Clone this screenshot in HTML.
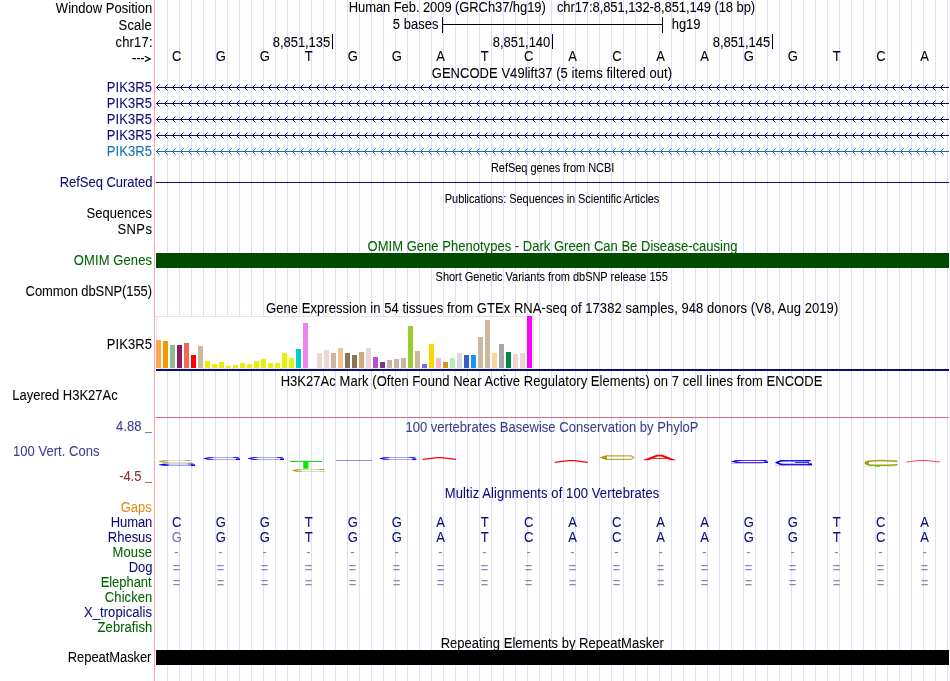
<!DOCTYPE html><html><head><meta charset="utf-8"><style>
html,body{margin:0;padding:0;background:#fff;width:950px;height:681px;overflow:hidden}
svg{display:block;will-change:transform}
text{font-family:"Liberation Sans",sans-serif;font-size:13px;stroke-width:0.06px}
.s{font-size:11px}
</style></head><body>
<svg width="950" height="681" viewBox="0 0 950 681">
<path d="M167.5 0V681 M179.5 0V681 M191.5 0V681 M203.5 0V681 M215.5 0V681 M227.5 0V681 M239.5 0V681 M251.5 0V681 M263.5 0V681 M275.5 0V681 M287.5 0V681 M299.5 0V681 M311.5 0V681 M323.5 0V681 M335.5 0V681 M347.5 0V681 M359.5 0V681 M371.5 0V681 M383.5 0V681 M395.5 0V681 M407.5 0V681 M419.5 0V681 M431.5 0V681 M443.5 0V681 M455.5 0V681 M467.5 0V681 M479.5 0V681 M491.5 0V681 M503.5 0V681 M515.5 0V681 M527.5 0V681 M539.5 0V681 M551.5 0V681 M563.5 0V681 M575.5 0V681 M587.5 0V681 M599.5 0V681 M611.5 0V681 M623.5 0V681 M635.5 0V681 M647.5 0V681 M659.5 0V681 M671.5 0V681 M683.5 0V681 M695.5 0V681 M707.5 0V681 M719.5 0V681 M731.5 0V681 M743.5 0V681 M755.5 0V681 M767.5 0V681 M779.5 0V681 M791.5 0V681 M803.5 0V681 M815.5 0V681 M827.5 0V681 M839.5 0V681 M851.5 0V681 M863.5 0V681 M875.5 0V681 M887.5 0V681 M899.5 0V681 M911.5 0V681 M923.5 0V681 M935.5 0V681 M947.5 0V681" stroke="#DDDDFF" fill="none"/>
<rect x="154" y="0" width="1" height="681" fill="#FFAAAA"/>
<path d="M442.5 17V33M662.5 17V33M442 24.5H663" stroke="#000" fill="none"/>
<rect x="332" y="34" width="1" height="15" fill="#000"/>
<rect x="552" y="34" width="1" height="15" fill="#000"/>
<rect x="772" y="34" width="1" height="15" fill="#000"/>
<path d="M156 87.5H949 M159.5 84.5L156.5 87.5L159.5 90.5 M167.5 84.5L164.5 87.5L167.5 90.5 M175.5 84.5L172.5 87.5L175.5 90.5 M183.5 84.5L180.5 87.5L183.5 90.5 M191.5 84.5L188.5 87.5L191.5 90.5 M199.5 84.5L196.5 87.5L199.5 90.5 M207.5 84.5L204.5 87.5L207.5 90.5 M215.5 84.5L212.5 87.5L215.5 90.5 M223.5 84.5L220.5 87.5L223.5 90.5 M231.5 84.5L228.5 87.5L231.5 90.5 M239.5 84.5L236.5 87.5L239.5 90.5 M247.5 84.5L244.5 87.5L247.5 90.5 M255.5 84.5L252.5 87.5L255.5 90.5 M263.5 84.5L260.5 87.5L263.5 90.5 M271.5 84.5L268.5 87.5L271.5 90.5 M279.5 84.5L276.5 87.5L279.5 90.5 M287.5 84.5L284.5 87.5L287.5 90.5 M295.5 84.5L292.5 87.5L295.5 90.5 M303.5 84.5L300.5 87.5L303.5 90.5 M311.5 84.5L308.5 87.5L311.5 90.5 M319.5 84.5L316.5 87.5L319.5 90.5 M327.5 84.5L324.5 87.5L327.5 90.5 M335.5 84.5L332.5 87.5L335.5 90.5 M343.5 84.5L340.5 87.5L343.5 90.5 M351.5 84.5L348.5 87.5L351.5 90.5 M359.5 84.5L356.5 87.5L359.5 90.5 M367.5 84.5L364.5 87.5L367.5 90.5 M375.5 84.5L372.5 87.5L375.5 90.5 M383.5 84.5L380.5 87.5L383.5 90.5 M391.5 84.5L388.5 87.5L391.5 90.5 M399.5 84.5L396.5 87.5L399.5 90.5 M407.5 84.5L404.5 87.5L407.5 90.5 M415.5 84.5L412.5 87.5L415.5 90.5 M423.5 84.5L420.5 87.5L423.5 90.5 M431.5 84.5L428.5 87.5L431.5 90.5 M439.5 84.5L436.5 87.5L439.5 90.5 M447.5 84.5L444.5 87.5L447.5 90.5 M455.5 84.5L452.5 87.5L455.5 90.5 M463.5 84.5L460.5 87.5L463.5 90.5 M471.5 84.5L468.5 87.5L471.5 90.5 M479.5 84.5L476.5 87.5L479.5 90.5 M487.5 84.5L484.5 87.5L487.5 90.5 M495.5 84.5L492.5 87.5L495.5 90.5 M503.5 84.5L500.5 87.5L503.5 90.5 M511.5 84.5L508.5 87.5L511.5 90.5 M519.5 84.5L516.5 87.5L519.5 90.5 M527.5 84.5L524.5 87.5L527.5 90.5 M535.5 84.5L532.5 87.5L535.5 90.5 M543.5 84.5L540.5 87.5L543.5 90.5 M551.5 84.5L548.5 87.5L551.5 90.5 M559.5 84.5L556.5 87.5L559.5 90.5 M567.5 84.5L564.5 87.5L567.5 90.5 M575.5 84.5L572.5 87.5L575.5 90.5 M583.5 84.5L580.5 87.5L583.5 90.5 M591.5 84.5L588.5 87.5L591.5 90.5 M599.5 84.5L596.5 87.5L599.5 90.5 M607.5 84.5L604.5 87.5L607.5 90.5 M615.5 84.5L612.5 87.5L615.5 90.5 M623.5 84.5L620.5 87.5L623.5 90.5 M631.5 84.5L628.5 87.5L631.5 90.5 M639.5 84.5L636.5 87.5L639.5 90.5 M647.5 84.5L644.5 87.5L647.5 90.5 M655.5 84.5L652.5 87.5L655.5 90.5 M663.5 84.5L660.5 87.5L663.5 90.5 M671.5 84.5L668.5 87.5L671.5 90.5 M679.5 84.5L676.5 87.5L679.5 90.5 M687.5 84.5L684.5 87.5L687.5 90.5 M695.5 84.5L692.5 87.5L695.5 90.5 M703.5 84.5L700.5 87.5L703.5 90.5 M711.5 84.5L708.5 87.5L711.5 90.5 M719.5 84.5L716.5 87.5L719.5 90.5 M727.5 84.5L724.5 87.5L727.5 90.5 M735.5 84.5L732.5 87.5L735.5 90.5 M743.5 84.5L740.5 87.5L743.5 90.5 M751.5 84.5L748.5 87.5L751.5 90.5 M759.5 84.5L756.5 87.5L759.5 90.5 M767.5 84.5L764.5 87.5L767.5 90.5 M775.5 84.5L772.5 87.5L775.5 90.5 M783.5 84.5L780.5 87.5L783.5 90.5 M791.5 84.5L788.5 87.5L791.5 90.5 M799.5 84.5L796.5 87.5L799.5 90.5 M807.5 84.5L804.5 87.5L807.5 90.5 M815.5 84.5L812.5 87.5L815.5 90.5 M823.5 84.5L820.5 87.5L823.5 90.5 M831.5 84.5L828.5 87.5L831.5 90.5 M839.5 84.5L836.5 87.5L839.5 90.5 M847.5 84.5L844.5 87.5L847.5 90.5 M855.5 84.5L852.5 87.5L855.5 90.5 M863.5 84.5L860.5 87.5L863.5 90.5 M871.5 84.5L868.5 87.5L871.5 90.5 M879.5 84.5L876.5 87.5L879.5 90.5 M887.5 84.5L884.5 87.5L887.5 90.5 M895.5 84.5L892.5 87.5L895.5 90.5 M903.5 84.5L900.5 87.5L903.5 90.5 M911.5 84.5L908.5 87.5L911.5 90.5 M919.5 84.5L916.5 87.5L919.5 90.5 M927.5 84.5L924.5 87.5L927.5 90.5 M935.5 84.5L932.5 87.5L935.5 90.5 M943.5 84.5L940.5 87.5L943.5 90.5" stroke="#0C0C78" fill="none"/>
<path d="M156 103.5H949 M159.5 100.5L156.5 103.5L159.5 106.5 M167.5 100.5L164.5 103.5L167.5 106.5 M175.5 100.5L172.5 103.5L175.5 106.5 M183.5 100.5L180.5 103.5L183.5 106.5 M191.5 100.5L188.5 103.5L191.5 106.5 M199.5 100.5L196.5 103.5L199.5 106.5 M207.5 100.5L204.5 103.5L207.5 106.5 M215.5 100.5L212.5 103.5L215.5 106.5 M223.5 100.5L220.5 103.5L223.5 106.5 M231.5 100.5L228.5 103.5L231.5 106.5 M239.5 100.5L236.5 103.5L239.5 106.5 M247.5 100.5L244.5 103.5L247.5 106.5 M255.5 100.5L252.5 103.5L255.5 106.5 M263.5 100.5L260.5 103.5L263.5 106.5 M271.5 100.5L268.5 103.5L271.5 106.5 M279.5 100.5L276.5 103.5L279.5 106.5 M287.5 100.5L284.5 103.5L287.5 106.5 M295.5 100.5L292.5 103.5L295.5 106.5 M303.5 100.5L300.5 103.5L303.5 106.5 M311.5 100.5L308.5 103.5L311.5 106.5 M319.5 100.5L316.5 103.5L319.5 106.5 M327.5 100.5L324.5 103.5L327.5 106.5 M335.5 100.5L332.5 103.5L335.5 106.5 M343.5 100.5L340.5 103.5L343.5 106.5 M351.5 100.5L348.5 103.5L351.5 106.5 M359.5 100.5L356.5 103.5L359.5 106.5 M367.5 100.5L364.5 103.5L367.5 106.5 M375.5 100.5L372.5 103.5L375.5 106.5 M383.5 100.5L380.5 103.5L383.5 106.5 M391.5 100.5L388.5 103.5L391.5 106.5 M399.5 100.5L396.5 103.5L399.5 106.5 M407.5 100.5L404.5 103.5L407.5 106.5 M415.5 100.5L412.5 103.5L415.5 106.5 M423.5 100.5L420.5 103.5L423.5 106.5 M431.5 100.5L428.5 103.5L431.5 106.5 M439.5 100.5L436.5 103.5L439.5 106.5 M447.5 100.5L444.5 103.5L447.5 106.5 M455.5 100.5L452.5 103.5L455.5 106.5 M463.5 100.5L460.5 103.5L463.5 106.5 M471.5 100.5L468.5 103.5L471.5 106.5 M479.5 100.5L476.5 103.5L479.5 106.5 M487.5 100.5L484.5 103.5L487.5 106.5 M495.5 100.5L492.5 103.5L495.5 106.5 M503.5 100.5L500.5 103.5L503.5 106.5 M511.5 100.5L508.5 103.5L511.5 106.5 M519.5 100.5L516.5 103.5L519.5 106.5 M527.5 100.5L524.5 103.5L527.5 106.5 M535.5 100.5L532.5 103.5L535.5 106.5 M543.5 100.5L540.5 103.5L543.5 106.5 M551.5 100.5L548.5 103.5L551.5 106.5 M559.5 100.5L556.5 103.5L559.5 106.5 M567.5 100.5L564.5 103.5L567.5 106.5 M575.5 100.5L572.5 103.5L575.5 106.5 M583.5 100.5L580.5 103.5L583.5 106.5 M591.5 100.5L588.5 103.5L591.5 106.5 M599.5 100.5L596.5 103.5L599.5 106.5 M607.5 100.5L604.5 103.5L607.5 106.5 M615.5 100.5L612.5 103.5L615.5 106.5 M623.5 100.5L620.5 103.5L623.5 106.5 M631.5 100.5L628.5 103.5L631.5 106.5 M639.5 100.5L636.5 103.5L639.5 106.5 M647.5 100.5L644.5 103.5L647.5 106.5 M655.5 100.5L652.5 103.5L655.5 106.5 M663.5 100.5L660.5 103.5L663.5 106.5 M671.5 100.5L668.5 103.5L671.5 106.5 M679.5 100.5L676.5 103.5L679.5 106.5 M687.5 100.5L684.5 103.5L687.5 106.5 M695.5 100.5L692.5 103.5L695.5 106.5 M703.5 100.5L700.5 103.5L703.5 106.5 M711.5 100.5L708.5 103.5L711.5 106.5 M719.5 100.5L716.5 103.5L719.5 106.5 M727.5 100.5L724.5 103.5L727.5 106.5 M735.5 100.5L732.5 103.5L735.5 106.5 M743.5 100.5L740.5 103.5L743.5 106.5 M751.5 100.5L748.5 103.5L751.5 106.5 M759.5 100.5L756.5 103.5L759.5 106.5 M767.5 100.5L764.5 103.5L767.5 106.5 M775.5 100.5L772.5 103.5L775.5 106.5 M783.5 100.5L780.5 103.5L783.5 106.5 M791.5 100.5L788.5 103.5L791.5 106.5 M799.5 100.5L796.5 103.5L799.5 106.5 M807.5 100.5L804.5 103.5L807.5 106.5 M815.5 100.5L812.5 103.5L815.5 106.5 M823.5 100.5L820.5 103.5L823.5 106.5 M831.5 100.5L828.5 103.5L831.5 106.5 M839.5 100.5L836.5 103.5L839.5 106.5 M847.5 100.5L844.5 103.5L847.5 106.5 M855.5 100.5L852.5 103.5L855.5 106.5 M863.5 100.5L860.5 103.5L863.5 106.5 M871.5 100.5L868.5 103.5L871.5 106.5 M879.5 100.5L876.5 103.5L879.5 106.5 M887.5 100.5L884.5 103.5L887.5 106.5 M895.5 100.5L892.5 103.5L895.5 106.5 M903.5 100.5L900.5 103.5L903.5 106.5 M911.5 100.5L908.5 103.5L911.5 106.5 M919.5 100.5L916.5 103.5L919.5 106.5 M927.5 100.5L924.5 103.5L927.5 106.5 M935.5 100.5L932.5 103.5L935.5 106.5 M943.5 100.5L940.5 103.5L943.5 106.5" stroke="#0C0C78" fill="none"/>
<path d="M156 119.5H949 M159.5 116.5L156.5 119.5L159.5 122.5 M167.5 116.5L164.5 119.5L167.5 122.5 M175.5 116.5L172.5 119.5L175.5 122.5 M183.5 116.5L180.5 119.5L183.5 122.5 M191.5 116.5L188.5 119.5L191.5 122.5 M199.5 116.5L196.5 119.5L199.5 122.5 M207.5 116.5L204.5 119.5L207.5 122.5 M215.5 116.5L212.5 119.5L215.5 122.5 M223.5 116.5L220.5 119.5L223.5 122.5 M231.5 116.5L228.5 119.5L231.5 122.5 M239.5 116.5L236.5 119.5L239.5 122.5 M247.5 116.5L244.5 119.5L247.5 122.5 M255.5 116.5L252.5 119.5L255.5 122.5 M263.5 116.5L260.5 119.5L263.5 122.5 M271.5 116.5L268.5 119.5L271.5 122.5 M279.5 116.5L276.5 119.5L279.5 122.5 M287.5 116.5L284.5 119.5L287.5 122.5 M295.5 116.5L292.5 119.5L295.5 122.5 M303.5 116.5L300.5 119.5L303.5 122.5 M311.5 116.5L308.5 119.5L311.5 122.5 M319.5 116.5L316.5 119.5L319.5 122.5 M327.5 116.5L324.5 119.5L327.5 122.5 M335.5 116.5L332.5 119.5L335.5 122.5 M343.5 116.5L340.5 119.5L343.5 122.5 M351.5 116.5L348.5 119.5L351.5 122.5 M359.5 116.5L356.5 119.5L359.5 122.5 M367.5 116.5L364.5 119.5L367.5 122.5 M375.5 116.5L372.5 119.5L375.5 122.5 M383.5 116.5L380.5 119.5L383.5 122.5 M391.5 116.5L388.5 119.5L391.5 122.5 M399.5 116.5L396.5 119.5L399.5 122.5 M407.5 116.5L404.5 119.5L407.5 122.5 M415.5 116.5L412.5 119.5L415.5 122.5 M423.5 116.5L420.5 119.5L423.5 122.5 M431.5 116.5L428.5 119.5L431.5 122.5 M439.5 116.5L436.5 119.5L439.5 122.5 M447.5 116.5L444.5 119.5L447.5 122.5 M455.5 116.5L452.5 119.5L455.5 122.5 M463.5 116.5L460.5 119.5L463.5 122.5 M471.5 116.5L468.5 119.5L471.5 122.5 M479.5 116.5L476.5 119.5L479.5 122.5 M487.5 116.5L484.5 119.5L487.5 122.5 M495.5 116.5L492.5 119.5L495.5 122.5 M503.5 116.5L500.5 119.5L503.5 122.5 M511.5 116.5L508.5 119.5L511.5 122.5 M519.5 116.5L516.5 119.5L519.5 122.5 M527.5 116.5L524.5 119.5L527.5 122.5 M535.5 116.5L532.5 119.5L535.5 122.5 M543.5 116.5L540.5 119.5L543.5 122.5 M551.5 116.5L548.5 119.5L551.5 122.5 M559.5 116.5L556.5 119.5L559.5 122.5 M567.5 116.5L564.5 119.5L567.5 122.5 M575.5 116.5L572.5 119.5L575.5 122.5 M583.5 116.5L580.5 119.5L583.5 122.5 M591.5 116.5L588.5 119.5L591.5 122.5 M599.5 116.5L596.5 119.5L599.5 122.5 M607.5 116.5L604.5 119.5L607.5 122.5 M615.5 116.5L612.5 119.5L615.5 122.5 M623.5 116.5L620.5 119.5L623.5 122.5 M631.5 116.5L628.5 119.5L631.5 122.5 M639.5 116.5L636.5 119.5L639.5 122.5 M647.5 116.5L644.5 119.5L647.5 122.5 M655.5 116.5L652.5 119.5L655.5 122.5 M663.5 116.5L660.5 119.5L663.5 122.5 M671.5 116.5L668.5 119.5L671.5 122.5 M679.5 116.5L676.5 119.5L679.5 122.5 M687.5 116.5L684.5 119.5L687.5 122.5 M695.5 116.5L692.5 119.5L695.5 122.5 M703.5 116.5L700.5 119.5L703.5 122.5 M711.5 116.5L708.5 119.5L711.5 122.5 M719.5 116.5L716.5 119.5L719.5 122.5 M727.5 116.5L724.5 119.5L727.5 122.5 M735.5 116.5L732.5 119.5L735.5 122.5 M743.5 116.5L740.5 119.5L743.5 122.5 M751.5 116.5L748.5 119.5L751.5 122.5 M759.5 116.5L756.5 119.5L759.5 122.5 M767.5 116.5L764.5 119.5L767.5 122.5 M775.5 116.5L772.5 119.5L775.5 122.5 M783.5 116.5L780.5 119.5L783.5 122.5 M791.5 116.5L788.5 119.5L791.5 122.5 M799.5 116.5L796.5 119.5L799.5 122.5 M807.5 116.5L804.5 119.5L807.5 122.5 M815.5 116.5L812.5 119.5L815.5 122.5 M823.5 116.5L820.5 119.5L823.5 122.5 M831.5 116.5L828.5 119.5L831.5 122.5 M839.5 116.5L836.5 119.5L839.5 122.5 M847.5 116.5L844.5 119.5L847.5 122.5 M855.5 116.5L852.5 119.5L855.5 122.5 M863.5 116.5L860.5 119.5L863.5 122.5 M871.5 116.5L868.5 119.5L871.5 122.5 M879.5 116.5L876.5 119.5L879.5 122.5 M887.5 116.5L884.5 119.5L887.5 122.5 M895.5 116.5L892.5 119.5L895.5 122.5 M903.5 116.5L900.5 119.5L903.5 122.5 M911.5 116.5L908.5 119.5L911.5 122.5 M919.5 116.5L916.5 119.5L919.5 122.5 M927.5 116.5L924.5 119.5L927.5 122.5 M935.5 116.5L932.5 119.5L935.5 122.5 M943.5 116.5L940.5 119.5L943.5 122.5" stroke="#0C0C78" fill="none"/>
<path d="M156 135.5H949 M159.5 132.5L156.5 135.5L159.5 138.5 M167.5 132.5L164.5 135.5L167.5 138.5 M175.5 132.5L172.5 135.5L175.5 138.5 M183.5 132.5L180.5 135.5L183.5 138.5 M191.5 132.5L188.5 135.5L191.5 138.5 M199.5 132.5L196.5 135.5L199.5 138.5 M207.5 132.5L204.5 135.5L207.5 138.5 M215.5 132.5L212.5 135.5L215.5 138.5 M223.5 132.5L220.5 135.5L223.5 138.5 M231.5 132.5L228.5 135.5L231.5 138.5 M239.5 132.5L236.5 135.5L239.5 138.5 M247.5 132.5L244.5 135.5L247.5 138.5 M255.5 132.5L252.5 135.5L255.5 138.5 M263.5 132.5L260.5 135.5L263.5 138.5 M271.5 132.5L268.5 135.5L271.5 138.5 M279.5 132.5L276.5 135.5L279.5 138.5 M287.5 132.5L284.5 135.5L287.5 138.5 M295.5 132.5L292.5 135.5L295.5 138.5 M303.5 132.5L300.5 135.5L303.5 138.5 M311.5 132.5L308.5 135.5L311.5 138.5 M319.5 132.5L316.5 135.5L319.5 138.5 M327.5 132.5L324.5 135.5L327.5 138.5 M335.5 132.5L332.5 135.5L335.5 138.5 M343.5 132.5L340.5 135.5L343.5 138.5 M351.5 132.5L348.5 135.5L351.5 138.5 M359.5 132.5L356.5 135.5L359.5 138.5 M367.5 132.5L364.5 135.5L367.5 138.5 M375.5 132.5L372.5 135.5L375.5 138.5 M383.5 132.5L380.5 135.5L383.5 138.5 M391.5 132.5L388.5 135.5L391.5 138.5 M399.5 132.5L396.5 135.5L399.5 138.5 M407.5 132.5L404.5 135.5L407.5 138.5 M415.5 132.5L412.5 135.5L415.5 138.5 M423.5 132.5L420.5 135.5L423.5 138.5 M431.5 132.5L428.5 135.5L431.5 138.5 M439.5 132.5L436.5 135.5L439.5 138.5 M447.5 132.5L444.5 135.5L447.5 138.5 M455.5 132.5L452.5 135.5L455.5 138.5 M463.5 132.5L460.5 135.5L463.5 138.5 M471.5 132.5L468.5 135.5L471.5 138.5 M479.5 132.5L476.5 135.5L479.5 138.5 M487.5 132.5L484.5 135.5L487.5 138.5 M495.5 132.5L492.5 135.5L495.5 138.5 M503.5 132.5L500.5 135.5L503.5 138.5 M511.5 132.5L508.5 135.5L511.5 138.5 M519.5 132.5L516.5 135.5L519.5 138.5 M527.5 132.5L524.5 135.5L527.5 138.5 M535.5 132.5L532.5 135.5L535.5 138.5 M543.5 132.5L540.5 135.5L543.5 138.5 M551.5 132.5L548.5 135.5L551.5 138.5 M559.5 132.5L556.5 135.5L559.5 138.5 M567.5 132.5L564.5 135.5L567.5 138.5 M575.5 132.5L572.5 135.5L575.5 138.5 M583.5 132.5L580.5 135.5L583.5 138.5 M591.5 132.5L588.5 135.5L591.5 138.5 M599.5 132.5L596.5 135.5L599.5 138.5 M607.5 132.5L604.5 135.5L607.5 138.5 M615.5 132.5L612.5 135.5L615.5 138.5 M623.5 132.5L620.5 135.5L623.5 138.5 M631.5 132.5L628.5 135.5L631.5 138.5 M639.5 132.5L636.5 135.5L639.5 138.5 M647.5 132.5L644.5 135.5L647.5 138.5 M655.5 132.5L652.5 135.5L655.5 138.5 M663.5 132.5L660.5 135.5L663.5 138.5 M671.5 132.5L668.5 135.5L671.5 138.5 M679.5 132.5L676.5 135.5L679.5 138.5 M687.5 132.5L684.5 135.5L687.5 138.5 M695.5 132.5L692.5 135.5L695.5 138.5 M703.5 132.5L700.5 135.5L703.5 138.5 M711.5 132.5L708.5 135.5L711.5 138.5 M719.5 132.5L716.5 135.5L719.5 138.5 M727.5 132.5L724.5 135.5L727.5 138.5 M735.5 132.5L732.5 135.5L735.5 138.5 M743.5 132.5L740.5 135.5L743.5 138.5 M751.5 132.5L748.5 135.5L751.5 138.5 M759.5 132.5L756.5 135.5L759.5 138.5 M767.5 132.5L764.5 135.5L767.5 138.5 M775.5 132.5L772.5 135.5L775.5 138.5 M783.5 132.5L780.5 135.5L783.5 138.5 M791.5 132.5L788.5 135.5L791.5 138.5 M799.5 132.5L796.5 135.5L799.5 138.5 M807.5 132.5L804.5 135.5L807.5 138.5 M815.5 132.5L812.5 135.5L815.5 138.5 M823.5 132.5L820.5 135.5L823.5 138.5 M831.5 132.5L828.5 135.5L831.5 138.5 M839.5 132.5L836.5 135.5L839.5 138.5 M847.5 132.5L844.5 135.5L847.5 138.5 M855.5 132.5L852.5 135.5L855.5 138.5 M863.5 132.5L860.5 135.5L863.5 138.5 M871.5 132.5L868.5 135.5L871.5 138.5 M879.5 132.5L876.5 135.5L879.5 138.5 M887.5 132.5L884.5 135.5L887.5 138.5 M895.5 132.5L892.5 135.5L895.5 138.5 M903.5 132.5L900.5 135.5L903.5 138.5 M911.5 132.5L908.5 135.5L911.5 138.5 M919.5 132.5L916.5 135.5L919.5 138.5 M927.5 132.5L924.5 135.5L927.5 138.5 M935.5 132.5L932.5 135.5L935.5 138.5 M943.5 132.5L940.5 135.5L943.5 138.5" stroke="#0C0C78" fill="none"/>
<path d="M156 151.5H949 M159.5 148.5L156.5 151.5L159.5 154.5 M167.5 148.5L164.5 151.5L167.5 154.5 M175.5 148.5L172.5 151.5L175.5 154.5 M183.5 148.5L180.5 151.5L183.5 154.5 M191.5 148.5L188.5 151.5L191.5 154.5 M199.5 148.5L196.5 151.5L199.5 154.5 M207.5 148.5L204.5 151.5L207.5 154.5 M215.5 148.5L212.5 151.5L215.5 154.5 M223.5 148.5L220.5 151.5L223.5 154.5 M231.5 148.5L228.5 151.5L231.5 154.5 M239.5 148.5L236.5 151.5L239.5 154.5 M247.5 148.5L244.5 151.5L247.5 154.5 M255.5 148.5L252.5 151.5L255.5 154.5 M263.5 148.5L260.5 151.5L263.5 154.5 M271.5 148.5L268.5 151.5L271.5 154.5 M279.5 148.5L276.5 151.5L279.5 154.5 M287.5 148.5L284.5 151.5L287.5 154.5 M295.5 148.5L292.5 151.5L295.5 154.5 M303.5 148.5L300.5 151.5L303.5 154.5 M311.5 148.5L308.5 151.5L311.5 154.5 M319.5 148.5L316.5 151.5L319.5 154.5 M327.5 148.5L324.5 151.5L327.5 154.5 M335.5 148.5L332.5 151.5L335.5 154.5 M343.5 148.5L340.5 151.5L343.5 154.5 M351.5 148.5L348.5 151.5L351.5 154.5 M359.5 148.5L356.5 151.5L359.5 154.5 M367.5 148.5L364.5 151.5L367.5 154.5 M375.5 148.5L372.5 151.5L375.5 154.5 M383.5 148.5L380.5 151.5L383.5 154.5 M391.5 148.5L388.5 151.5L391.5 154.5 M399.5 148.5L396.5 151.5L399.5 154.5 M407.5 148.5L404.5 151.5L407.5 154.5 M415.5 148.5L412.5 151.5L415.5 154.5 M423.5 148.5L420.5 151.5L423.5 154.5 M431.5 148.5L428.5 151.5L431.5 154.5 M439.5 148.5L436.5 151.5L439.5 154.5 M447.5 148.5L444.5 151.5L447.5 154.5 M455.5 148.5L452.5 151.5L455.5 154.5 M463.5 148.5L460.5 151.5L463.5 154.5 M471.5 148.5L468.5 151.5L471.5 154.5 M479.5 148.5L476.5 151.5L479.5 154.5 M487.5 148.5L484.5 151.5L487.5 154.5 M495.5 148.5L492.5 151.5L495.5 154.5 M503.5 148.5L500.5 151.5L503.5 154.5 M511.5 148.5L508.5 151.5L511.5 154.5 M519.5 148.5L516.5 151.5L519.5 154.5 M527.5 148.5L524.5 151.5L527.5 154.5 M535.5 148.5L532.5 151.5L535.5 154.5 M543.5 148.5L540.5 151.5L543.5 154.5 M551.5 148.5L548.5 151.5L551.5 154.5 M559.5 148.5L556.5 151.5L559.5 154.5 M567.5 148.5L564.5 151.5L567.5 154.5 M575.5 148.5L572.5 151.5L575.5 154.5 M583.5 148.5L580.5 151.5L583.5 154.5 M591.5 148.5L588.5 151.5L591.5 154.5 M599.5 148.5L596.5 151.5L599.5 154.5 M607.5 148.5L604.5 151.5L607.5 154.5 M615.5 148.5L612.5 151.5L615.5 154.5 M623.5 148.5L620.5 151.5L623.5 154.5 M631.5 148.5L628.5 151.5L631.5 154.5 M639.5 148.5L636.5 151.5L639.5 154.5 M647.5 148.5L644.5 151.5L647.5 154.5 M655.5 148.5L652.5 151.5L655.5 154.5 M663.5 148.5L660.5 151.5L663.5 154.5 M671.5 148.5L668.5 151.5L671.5 154.5 M679.5 148.5L676.5 151.5L679.5 154.5 M687.5 148.5L684.5 151.5L687.5 154.5 M695.5 148.5L692.5 151.5L695.5 154.5 M703.5 148.5L700.5 151.5L703.5 154.5 M711.5 148.5L708.5 151.5L711.5 154.5 M719.5 148.5L716.5 151.5L719.5 154.5 M727.5 148.5L724.5 151.5L727.5 154.5 M735.5 148.5L732.5 151.5L735.5 154.5 M743.5 148.5L740.5 151.5L743.5 154.5 M751.5 148.5L748.5 151.5L751.5 154.5 M759.5 148.5L756.5 151.5L759.5 154.5 M767.5 148.5L764.5 151.5L767.5 154.5 M775.5 148.5L772.5 151.5L775.5 154.5 M783.5 148.5L780.5 151.5L783.5 154.5 M791.5 148.5L788.5 151.5L791.5 154.5 M799.5 148.5L796.5 151.5L799.5 154.5 M807.5 148.5L804.5 151.5L807.5 154.5 M815.5 148.5L812.5 151.5L815.5 154.5 M823.5 148.5L820.5 151.5L823.5 154.5 M831.5 148.5L828.5 151.5L831.5 154.5 M839.5 148.5L836.5 151.5L839.5 154.5 M847.5 148.5L844.5 151.5L847.5 154.5 M855.5 148.5L852.5 151.5L855.5 154.5 M863.5 148.5L860.5 151.5L863.5 154.5 M871.5 148.5L868.5 151.5L871.5 154.5 M879.5 148.5L876.5 151.5L879.5 154.5 M887.5 148.5L884.5 151.5L887.5 154.5 M895.5 148.5L892.5 151.5L895.5 154.5 M903.5 148.5L900.5 151.5L903.5 154.5 M911.5 148.5L908.5 151.5L911.5 154.5 M919.5 148.5L916.5 151.5L919.5 154.5 M927.5 148.5L924.5 151.5L927.5 154.5 M935.5 148.5L932.5 151.5L935.5 154.5 M943.5 148.5L940.5 151.5L943.5 154.5" stroke="#1470B4" fill="none"/>
<rect x="156" y="182" width="793" height="1" fill="#0C0C78"/>
<rect x="156" y="253" width="793" height="15" fill="#004B00"/>
<rect x="156" y="316" width="378" height="53" fill="#fff"/>
<path d="M156 316.5H533.5V368M156.5 316V368" stroke="#E6E6E6" fill="none"/>
<rect x="156" y="340" width="5" height="28" fill="#FFA54F"/>
<rect x="163" y="341" width="5" height="27" fill="#EE9A00"/>
<rect x="170" y="345" width="5" height="23" fill="#8FBC8F"/>
<rect x="177" y="345" width="5" height="23" fill="#8B1C62"/>
<rect x="184" y="343" width="5" height="25" fill="#EE6A50"/>
<rect x="191" y="355" width="5" height="13" fill="#FF0000"/>
<rect x="198" y="346" width="5" height="22" fill="#CDB79E"/>
<rect x="205" y="361" width="5" height="7" fill="#EEEE00"/>
<rect x="212" y="364" width="5" height="4" fill="#EEEE00"/>
<rect x="219" y="362" width="5" height="6" fill="#EEEE00"/>
<rect x="226" y="366" width="5" height="2" fill="#EEEE00"/>
<rect x="233" y="365" width="5" height="3" fill="#EEEE00"/>
<rect x="240" y="363" width="5" height="5" fill="#EEEE00"/>
<rect x="247" y="364" width="5" height="4" fill="#EEEE00"/>
<rect x="254" y="361" width="5" height="7" fill="#EEEE00"/>
<rect x="261" y="359" width="5" height="9" fill="#EEEE00"/>
<rect x="268" y="363" width="5" height="5" fill="#EEEE00"/>
<rect x="275" y="363" width="5" height="5" fill="#EEEE00"/>
<rect x="282" y="353" width="5" height="15" fill="#EEEE00"/>
<rect x="289" y="358" width="5" height="10" fill="#EEEE00"/>
<rect x="296" y="349" width="5" height="19" fill="#00CDCD"/>
<rect x="303" y="323" width="5" height="45" fill="#EE82EE"/>
<rect x="317" y="353" width="5" height="15" fill="#EED5D2"/>
<rect x="324" y="350" width="5" height="18" fill="#EED5D2"/>
<rect x="331" y="353" width="5" height="15" fill="#CDB79E"/>
<rect x="338" y="348" width="5" height="20" fill="#EEC591"/>
<rect x="345" y="353" width="5" height="15" fill="#8B7355"/>
<rect x="352" y="355" width="5" height="13" fill="#8B7355"/>
<rect x="359" y="352" width="5" height="16" fill="#CDAA7D"/>
<rect x="366" y="348" width="5" height="20" fill="#EED5D2"/>
<rect x="373" y="357" width="5" height="11" fill="#B452CD"/>
<rect x="380" y="362" width="5" height="6" fill="#7A378B"/>
<rect x="387" y="360" width="5" height="8" fill="#CDB79E"/>
<rect x="394" y="359" width="5" height="9" fill="#CDB79E"/>
<rect x="401" y="358" width="5" height="10" fill="#CDB79E"/>
<rect x="408" y="326" width="5" height="42" fill="#9ACD32"/>
<rect x="415" y="351" width="5" height="17" fill="#CDB79E"/>
<rect x="422" y="364" width="5" height="4" fill="#7A67EE"/>
<rect x="429" y="344" width="5" height="24" fill="#FFD700"/>
<rect x="436" y="358" width="5" height="10" fill="#FFB6C1"/>
<rect x="443" y="362" width="5" height="6" fill="#CD9B1D"/>
<rect x="450" y="358" width="5" height="10" fill="#B4EEB4"/>
<rect x="457" y="353" width="5" height="15" fill="#D9D9D9"/>
<rect x="464" y="355" width="5" height="13" fill="#3A5FCD"/>
<rect x="471" y="355" width="5" height="13" fill="#1E90FF"/>
<rect x="478" y="337" width="5" height="31" fill="#CDB79E"/>
<rect x="485" y="320" width="5" height="48" fill="#CDB79E"/>
<rect x="492" y="353" width="5" height="15" fill="#FFD39B"/>
<rect x="499" y="344" width="5" height="24" fill="#A6A6A6"/>
<rect x="506" y="352" width="5" height="16" fill="#008B45"/>
<rect x="513" y="354" width="5" height="14" fill="#EED5D2"/>
<rect x="520" y="353" width="5" height="15" fill="#EED5D2"/>
<rect x="527" y="316" width="5" height="52" fill="#FF00FF"/>
<rect x="157" y="368" width="377" height="1" fill="#EEEEE8"/>
<rect x="156" y="369" width="793" height="2" fill="#0C0C78"/>
<rect x="156" y="417" width="793" height="1" fill="#D86A82"/>
<rect x="156" y="650" width="793" height="15" fill="#000"/>
<rect x="145" y="432" width="7" height="1" fill="#7A7AB0"/>
<path d="M132.3 58.6H135.9M136.8 58.6H140M140.9 58.6H144" stroke="#000" stroke-width="1.1" fill="none"/>
<path d="M144.8 56.3L150.2 58.9L144.8 61.5" stroke="#000" stroke-width="1.2" fill="none" stroke-linejoin="miter"/>
<rect x="145" y="482" width="7" height="1" fill="#A86A6A"/>
<path d="M189.8 460.5L164.7 460.5L159.2 461.5L164.7 462.5L191.8 462.5" stroke="#A89E10" stroke-width="1.0" stroke-opacity="0.35" fill="none" stroke-linejoin="round"/>
<path d="M158.7 461.5L163.7 460.2L168.7 460.4L168.7 460.9L163.7 461.2L161.7 461.5L163.7 461.8L168.7 462.1L168.7 462.6L163.7 462.8Z" fill="#A89E10"/>
<rect x="184.8" y="460" width="6" height="1" fill="#A89E10" fill-opacity="0.7"/>
<path d="M193 464.0L164.7 464.0L159.2 464.75L164.7 465.5L195 465.5" stroke="#0000FF" stroke-width="1.0" stroke-opacity="0.35" fill="none" stroke-linejoin="round"/>
<path d="M158.7 464.75L163.7 463.7L168.7 463.9L168.7 464.4L163.7 464.7L161.7 464.75L163.7 464.8L168.7 465.1L168.7 465.6L163.7 465.8Z" fill="#0000FF"/>
<rect x="188" y="463.5" width="6" height="1" fill="#0000FF" fill-opacity="0.7"/>
<rect x="191" y="464.4" width="4" height="1.6" fill="#0000FF"/>
<path d="M238 457.5L209.4 457.5L203.9 458.5L209.4 459.5L240 459.5" stroke="#0000FF" stroke-width="1.0" stroke-opacity="0.35" fill="none" stroke-linejoin="round"/>
<path d="M203.4 458.5L208.4 457.2L213.4 457.4L213.4 457.9L208.4 458.2L206.4 458.5L208.4 458.8L213.4 459.1L213.4 459.6L208.4 459.8Z" fill="#0000FF"/>
<rect x="233" y="457" width="6" height="1" fill="#0000FF" fill-opacity="0.7"/>
<rect x="236" y="458.4" width="4" height="1.6" fill="#0000FF"/>
<path d="M282 457.5L253.6 457.5L248.1 458.5L253.6 459.5L284 459.5" stroke="#0000FF" stroke-width="1.0" stroke-opacity="0.35" fill="none" stroke-linejoin="round"/>
<path d="M247.6 458.5L252.6 457.2L257.6 457.4L257.6 457.9L252.6 458.2L250.6 458.5L252.6 458.8L257.6 459.1L257.6 459.6L252.6 459.8Z" fill="#0000FF"/>
<rect x="277" y="457" width="6" height="1" fill="#0000FF" fill-opacity="0.7"/>
<rect x="280" y="458.4" width="4" height="1.6" fill="#0000FF"/>
<rect x="290" y="461" width="32" height="1" fill="#00EE00"/>
<rect x="303.2" y="462" width="5.2" height="6.8" fill="#00EE00"/>
<path d="M323.5 469.5L297.8 469.5L292.3 470.5L297.8 471.5L325.5 471.5" stroke="#A89E10" stroke-width="1.0" stroke-opacity="0.35" fill="none" stroke-linejoin="round"/>
<path d="M291.8 470.5L296.8 469.2L301.8 469.4L301.8 469.9L296.8 470.2L294.8 470.5L296.8 470.8L301.8 471.1L301.8 471.6L296.8 471.8Z" fill="#A89E10"/>
<rect x="318.5" y="469" width="6" height="1" fill="#A89E10" fill-opacity="0.7"/>
<rect x="336" y="460" width="36" height="1" fill="#0000FF" fill-opacity="0.45"/>
<path d="M414.3 457.5L385.3 457.5L379.8 458.5L385.3 459.5L416.3 459.5" stroke="#0000FF" stroke-width="1.0" stroke-opacity="0.35" fill="none" stroke-linejoin="round"/>
<path d="M379.3 458.5L384.3 457.2L389.3 457.4L389.3 457.9L384.3 458.2L382.3 458.5L384.3 458.8L389.3 459.1L389.3 459.6L384.3 459.8Z" fill="#0000FF"/>
<rect x="409.3" y="457" width="6" height="1" fill="#0000FF" fill-opacity="0.7"/>
<rect x="412.3" y="458.4" width="4" height="1.6" fill="#0000FF"/>
<path d="M422.5 459.4L437.25 457.6L441.25 457.6L456 459.4" stroke="#FF0000" stroke-width="1.3" fill="none" stroke-linejoin="round"/>
<path d="M554.8 462.3L568.25 460.6L574.25 460.6L587.7 462.3" stroke="#FF0000" stroke-width="1.2" fill="none" stroke-linejoin="round"/>
<path d="M601 457.6L606 455.9L631 455.9L634 457.6L631 459.4L606 459.4Z" stroke="#A89E10" stroke-width="1.1" fill="none" stroke-opacity="0.85"/>
<path d="M599.8 457.6L607 455.5L607 459.8Z" fill="#A89E10"/>
<path d="M642.5 460.2L656.5 454.8L662.5 454.8L676.5 460.2L670.5 460.2L661.5 456.6L657.5 456.6L648.5 460.2Z" fill="#FF0000"/>
<rect x="652" y="458" width="15" height="1" fill="#FF0000" fill-opacity="0.8"/>
<rect x="731" y="463" width="32" height="0.8" fill="#FF9999"/>
<path d="M766 460.5L737.5 460.5L732.0 461.5L737.5 462.5L768 462.5" stroke="#0000FF" stroke-width="1.2" stroke-opacity="0.8" fill="none" stroke-linejoin="round"/>
<path d="M731.5 461.5L736.5 460.2L741.5 460.4L741.5 460.9L736.5 461.2L734.5 461.5L736.5 461.8L741.5 462.1L741.5 462.6L736.5 462.8Z" fill="#0000FF"/>
<rect x="761" y="460" width="6" height="1" fill="#0000FF" fill-opacity="0.7"/>
<rect x="764" y="461.4" width="4" height="1.6" fill="#0000FF"/>
<rect x="775" y="464.8" width="38" height="0.8" fill="#FF9999"/>
<path d="M810 460.7L781.5 460.7L776.0 462.6L781.5 464.5L812 464.5" stroke="#0000FF" stroke-width="1.4" stroke-opacity="0.9" fill="none" stroke-linejoin="round"/>
<path d="M775.5 462.6L780.5 460.4L785.5 460.59999999999997L785.5 461.09999999999997L780.5 461.4L778.5 462.6L780.5 463.8L785.5 464.1L785.5 464.6L780.5 464.8Z" fill="#0000FF"/>
<rect x="805" y="460.2" width="6" height="1" fill="#0000FF" fill-opacity="0.7"/>
<rect x="808" y="463.4" width="4" height="1.6" fill="#0000FF"/>
<rect x="795" y="462" width="14" height="0.8" fill="#0000FF"/>
<rect x="862" y="466" width="34" height="0.6" fill="#AAFFAA"/>
<rect x="875" y="465.5" width="5" height="1.2" fill="#00EE00"/>
<path d="M897.5 461.2C888 460.6 876 460.4 870 460.9C866 461.5 865 462.6 865.2 463C865.6 464.2 868 465 872 465.2C880 465.5 890 465.3 897.5 464.8" stroke="#A89E10" stroke-width="1.5" fill="none"/>
<path d="M864.5 463L869 460.5L869 465.5Z" fill="#A89E10"/>
<path d="M906.5 462C912 461.5 916 460.6 920 460.5C926 460.5 930 460.6 934 461.5L940 462" stroke="#FF0000" stroke-width="1" stroke-opacity="0.75" fill="none"/>
<text transform="translate(348.78 12.00) scale(1 1.08)" stroke="#000" textLength="197.00" lengthAdjust="spacing">Human Feb. 2009 (GRCh37/hg19)</text>
<text transform="translate(556.91 12.00) scale(1 1.08)" stroke="#000" textLength="198.22" lengthAdjust="spacing">chr17:8,851,132-8,851,149 (18 bp)</text>
<text transform="translate(392.76 29.00) scale(1 1.08)" stroke="#000" textLength="45.66" lengthAdjust="spacing">5 bases</text>
<text transform="translate(671.81 29.00) scale(1 1.08)" stroke="#000" textLength="28.58" lengthAdjust="spacing">hg19</text>
<text transform="translate(272.86 47.00) scale(1 1.08)" stroke="#000" textLength="57.29" lengthAdjust="spacing">8,851,135</text>
<text transform="translate(492.86 47.00) scale(1 1.08)" stroke="#000" textLength="57.41" lengthAdjust="spacing">8,851,140</text>
<text transform="translate(712.86 47.00) scale(1 1.08)" stroke="#000" textLength="57.26" lengthAdjust="spacing">8,851,145</text>
<text transform="translate(171.95 61.00) scale(1 1.08)" stroke="#000">C</text>
<text transform="translate(215.78 61.00) scale(1 1.08)" stroke="#000">G</text>
<text transform="translate(259.65 61.00) scale(1 1.08)" stroke="#000">G</text>
<text transform="translate(304.67 61.00) scale(1 1.08)" stroke="#000">T</text>
<text transform="translate(347.78 61.00) scale(1 1.08)" stroke="#000">G</text>
<text transform="translate(391.65 61.00) scale(1 1.08)" stroke="#000">G</text>
<text transform="translate(436.16 61.00) scale(1 1.08)" stroke="#000">A</text>
<text transform="translate(480.67 61.00) scale(1 1.08)" stroke="#000">T</text>
<text transform="translate(523.95 61.00) scale(1 1.08)" stroke="#000">C</text>
<text transform="translate(568.16 61.00) scale(1 1.08)" stroke="#000">A</text>
<text transform="translate(612.13 61.00) scale(1 1.08)" stroke="#000">C</text>
<text transform="translate(656.16 61.00) scale(1 1.08)" stroke="#000">A</text>
<text transform="translate(700.16 61.00) scale(1 1.08)" stroke="#000">A</text>
<text transform="translate(743.78 61.00) scale(1 1.08)" stroke="#000">G</text>
<text transform="translate(787.65 61.00) scale(1 1.08)" stroke="#000">G</text>
<text transform="translate(832.67 61.00) scale(1 1.08)" stroke="#000">T</text>
<text transform="translate(876.13 61.00) scale(1 1.08)" stroke="#000">C</text>
<text transform="translate(920.16 61.00) scale(1 1.08)" stroke="#000">A</text>
<text transform="translate(431.75 78.00) scale(1 1.08)" stroke="#000" textLength="240.36" lengthAdjust="spacing">GENCODE V49lift37 (5 items filtered out)</text>
<text transform="translate(490.93 172.00) scale(1 1.08)" class="s" stroke="#000" textLength="123.46" lengthAdjust="spacing">RefSeq genes from NCBI</text>
<text transform="translate(444.82 203.00) scale(1 1.08)" class="s" stroke="#000" textLength="214.52" lengthAdjust="spacing">Publications: Sequences in Scientific Articles</text>
<text transform="translate(367.62 251.00) scale(1 1.08)" fill="#006400" stroke="#006400" textLength="369.88" lengthAdjust="spacing">OMIM Gene Phenotypes - Dark Green Can Be Disease-causing</text>
<text transform="translate(435.61 281.00) scale(1 1.08)" class="s" stroke="#000" textLength="232.20" lengthAdjust="spacing">Short Genetic Variants from dbSNP release 155</text>
<text transform="translate(266.10 313.00) scale(1 1.08)" stroke="#000" textLength="572.14" lengthAdjust="spacing">Gene Expression in 54 tissues from GTEx RNA-seq of 17382 samples, 948 donors (V8, Aug 2019)</text>
<text transform="translate(280.64 386.00) scale(1 1.08)" stroke="#000" textLength="541.69" lengthAdjust="spacing">H3K27Ac Mark (Often Found Near Active Regulatory Elements) on 7 cell lines from ENCODE</text>
<text transform="translate(405.41 432.00) scale(1 1.08)" fill="#3C3C8C" stroke="#3C3C8C" textLength="293.10" lengthAdjust="spacing">100 vertebrates Basewise Conservation by PhyloP</text>
<text transform="translate(444.83 498.00) scale(1 1.08)" fill="#0C0C78" stroke="#0C0C78" textLength="214.50" lengthAdjust="spacing">Multiz Alignments of 100 Vertebrates</text>
<text transform="translate(440.64 648.00) scale(1 1.08)" stroke="#000" textLength="223.18" lengthAdjust="spacing">Repeating Elements by RepeatMasker</text>
<text transform="translate(55.85 13.00) scale(1 1.08)" stroke="#000" textLength="96.40" lengthAdjust="spacing">Window Position</text>
<text transform="translate(118.59 30.00) scale(1 1.08)" stroke="#000" textLength="33.24" lengthAdjust="spacing">Scale</text>
<text transform="translate(115.50 47.00) scale(1 1.08)" stroke="#000" textLength="37.07" lengthAdjust="spacing">chr17:</text>
<text transform="translate(106.85 92.00) scale(1 1.08)" fill="#0C0C78" stroke="#0C0C78" textLength="45.04" lengthAdjust="spacing">PIK3R5</text>
<text transform="translate(106.85 108.00) scale(1 1.08)" fill="#0C0C78" stroke="#0C0C78" textLength="45.04" lengthAdjust="spacing">PIK3R5</text>
<text transform="translate(106.85 124.00) scale(1 1.08)" fill="#0C0C78" stroke="#0C0C78" textLength="45.04" lengthAdjust="spacing">PIK3R5</text>
<text transform="translate(106.85 140.00) scale(1 1.08)" fill="#0C0C78" stroke="#0C0C78" textLength="45.04" lengthAdjust="spacing">PIK3R5</text>
<text transform="translate(106.87 156.00) scale(1 1.08)" fill="#1470B4" stroke="#1470B4" textLength="45.14" lengthAdjust="spacing">PIK3R5</text>
<text transform="translate(59.72 187.00) scale(1 1.08)" fill="#0C0C78" stroke="#0C0C78" textLength="92.69" lengthAdjust="spacing">RefSeq Curated</text>
<text transform="translate(86.59 218.00) scale(1 1.08)" stroke="#000" textLength="65.33" lengthAdjust="spacing">Sequences</text>
<text transform="translate(117.59 234.00) scale(1 1.08)" stroke="#000" textLength="34.29" lengthAdjust="spacing">SNPs</text>
<text transform="translate(73.82 265.00) scale(1 1.08)" fill="#006400" stroke="#006400" textLength="78.21" lengthAdjust="spacing">OMIM Genes</text>
<text transform="translate(25.59 296.00) scale(1 1.08)" stroke="#000" textLength="126.50" lengthAdjust="spacing">Common dbSNP(155)</text>
<text transform="translate(106.78 349.00) scale(1 1.08)" stroke="#000" textLength="45.23" lengthAdjust="spacing">PIK3R5</text>
<text transform="translate(12.37 400.00) scale(1 1.08)" stroke="#000" textLength="105.33" lengthAdjust="spacing">Layered H3K27Ac</text>
<text transform="translate(116.03 431.00) scale(1 1.08)" fill="#3C3C8C" stroke="#3C3C8C" textLength="25.49" lengthAdjust="spacing">4.88</text>
<text transform="translate(12.94 456.00) scale(1 1.08)" fill="#3C3C8C" stroke="#3C3C8C" textLength="86.57" lengthAdjust="spacing">100 Vert. Cons</text>
<text transform="translate(119.14 481.00) scale(1 1.08)" fill="#8C3232" stroke="#8C3232" textLength="22.29" lengthAdjust="spacing">-4.5</text>
<text transform="translate(120.75 512.00) scale(1 1.08)" fill="#E08A1E" stroke="#E08A1E" textLength="30.99" lengthAdjust="spacing">Gaps</text>
<text transform="translate(110.84 527.00) scale(1 1.08)" fill="#0C0C78" stroke="#0C0C78" textLength="41.42" lengthAdjust="spacing">Human</text>
<text transform="translate(107.84 542.00) scale(1 1.08)" fill="#0C0C78" stroke="#0C0C78" textLength="44.01" lengthAdjust="spacing">Rhesus</text>
<text transform="translate(112.51 557.00) scale(1 1.08)" fill="#006400" stroke="#006400" textLength="39.48" lengthAdjust="spacing">Mouse</text>
<text transform="translate(128.84 572.00) scale(1 1.08)" fill="#0C0C78" stroke="#0C0C78" textLength="23.55" lengthAdjust="spacing">Dog</text>
<text transform="translate(100.70 587.00) scale(1 1.08)" fill="#006400" stroke="#006400" textLength="50.93" lengthAdjust="spacing">Elephant</text>
<text transform="translate(104.87 602.00) scale(1 1.08)" fill="#006400" stroke="#006400" textLength="47.45" lengthAdjust="spacing">Chicken</text>
<text transform="translate(83.95 617.00) scale(1 1.08)" fill="#0C0C78" stroke="#0C0C78" textLength="68.10" lengthAdjust="spacing">X_tropicalis</text>
<text transform="translate(97.61 632.00) scale(1 1.08)" fill="#006400" stroke="#006400" textLength="54.62" lengthAdjust="spacing">Zebrafish</text>
<text transform="translate(67.78 662.00) scale(1 1.08)" stroke="#000" textLength="83.68" lengthAdjust="spacing">RepeatMasker</text>
<text transform="translate(171.97 527.00) scale(1 1.08)" fill="#0C0C78" stroke="#0C0C78">C</text>
<text transform="translate(171.66 542.00) scale(1 1.08)" fill="#7878A0" stroke="#7878A0">G</text>
<text transform="translate(174.34 557.00) scale(1 1.08)" fill="#8A8AB8">-</text>
<text transform="translate(172.78 573.00) scale(1 1.08)" fill="#8A8AB8">=</text>
<text transform="translate(172.78 588.00) scale(1 1.08)" fill="#8A8AB8">=</text>
<text transform="translate(215.66 527.00) scale(1 1.08)" fill="#0C0C78" stroke="#0C0C78">G</text>
<text transform="translate(215.66 542.00) scale(1 1.08)" fill="#0C0C78" stroke="#0C0C78">G</text>
<text transform="translate(218.34 557.00) scale(1 1.08)" fill="#8A8AB8">-</text>
<text transform="translate(216.86 573.00) scale(1 1.08)" fill="#8A8AB8">=</text>
<text transform="translate(216.86 588.00) scale(1 1.08)" fill="#8A8AB8">=</text>
<text transform="translate(259.65 527.00) scale(1 1.08)" fill="#0C0C78" stroke="#0C0C78">G</text>
<text transform="translate(259.65 542.00) scale(1 1.08)" fill="#0C0C78" stroke="#0C0C78">G</text>
<text transform="translate(262.42 557.00) scale(1 1.08)" fill="#8A8AB8">-</text>
<text transform="translate(260.86 573.00) scale(1 1.08)" fill="#8A8AB8">=</text>
<text transform="translate(260.86 588.00) scale(1 1.08)" fill="#8A8AB8">=</text>
<text transform="translate(304.65 527.00) scale(1 1.08)" fill="#0C0C78" stroke="#0C0C78">T</text>
<text transform="translate(304.65 542.00) scale(1 1.08)" fill="#0C0C78" stroke="#0C0C78">T</text>
<text transform="translate(306.34 557.00) scale(1 1.08)" fill="#8A8AB8">-</text>
<text transform="translate(304.78 573.00) scale(1 1.08)" fill="#8A8AB8">=</text>
<text transform="translate(304.78 588.00) scale(1 1.08)" fill="#8A8AB8">=</text>
<text transform="translate(347.66 527.00) scale(1 1.08)" fill="#0C0C78" stroke="#0C0C78">G</text>
<text transform="translate(347.66 542.00) scale(1 1.08)" fill="#0C0C78" stroke="#0C0C78">G</text>
<text transform="translate(350.34 557.00) scale(1 1.08)" fill="#8A8AB8">-</text>
<text transform="translate(348.86 573.00) scale(1 1.08)" fill="#8A8AB8">=</text>
<text transform="translate(348.86 588.00) scale(1 1.08)" fill="#8A8AB8">=</text>
<text transform="translate(391.65 527.00) scale(1 1.08)" fill="#0C0C78" stroke="#0C0C78">G</text>
<text transform="translate(391.65 542.00) scale(1 1.08)" fill="#0C0C78" stroke="#0C0C78">G</text>
<text transform="translate(394.42 557.00) scale(1 1.08)" fill="#8A8AB8">-</text>
<text transform="translate(392.86 573.00) scale(1 1.08)" fill="#8A8AB8">=</text>
<text transform="translate(392.86 588.00) scale(1 1.08)" fill="#8A8AB8">=</text>
<text transform="translate(436.18 527.00) scale(1 1.08)" fill="#0C0C78" stroke="#0C0C78">A</text>
<text transform="translate(436.18 542.00) scale(1 1.08)" fill="#0C0C78" stroke="#0C0C78">A</text>
<text transform="translate(438.34 557.00) scale(1 1.08)" fill="#8A8AB8">-</text>
<text transform="translate(436.78 573.00) scale(1 1.08)" fill="#8A8AB8">=</text>
<text transform="translate(436.78 588.00) scale(1 1.08)" fill="#8A8AB8">=</text>
<text transform="translate(480.65 527.00) scale(1 1.08)" fill="#0C0C78" stroke="#0C0C78">T</text>
<text transform="translate(480.65 542.00) scale(1 1.08)" fill="#0C0C78" stroke="#0C0C78">T</text>
<text transform="translate(482.34 557.00) scale(1 1.08)" fill="#8A8AB8">-</text>
<text transform="translate(480.86 573.00) scale(1 1.08)" fill="#8A8AB8">=</text>
<text transform="translate(480.86 588.00) scale(1 1.08)" fill="#8A8AB8">=</text>
<text transform="translate(523.97 527.00) scale(1 1.08)" fill="#0C0C78" stroke="#0C0C78">C</text>
<text transform="translate(523.97 542.00) scale(1 1.08)" fill="#0C0C78" stroke="#0C0C78">C</text>
<text transform="translate(526.42 557.00) scale(1 1.08)" fill="#8A8AB8">-</text>
<text transform="translate(524.86 573.00) scale(1 1.08)" fill="#8A8AB8">=</text>
<text transform="translate(524.86 588.00) scale(1 1.08)" fill="#8A8AB8">=</text>
<text transform="translate(568.18 527.00) scale(1 1.08)" fill="#0C0C78" stroke="#0C0C78">A</text>
<text transform="translate(568.18 542.00) scale(1 1.08)" fill="#0C0C78" stroke="#0C0C78">A</text>
<text transform="translate(570.34 557.00) scale(1 1.08)" fill="#8A8AB8">-</text>
<text transform="translate(568.78 573.00) scale(1 1.08)" fill="#8A8AB8">=</text>
<text transform="translate(568.78 588.00) scale(1 1.08)" fill="#8A8AB8">=</text>
<text transform="translate(611.92 527.00) scale(1 1.08)" fill="#0C0C78" stroke="#0C0C78">C</text>
<text transform="translate(611.92 542.00) scale(1 1.08)" fill="#0C0C78" stroke="#0C0C78">C</text>
<text transform="translate(614.34 557.00) scale(1 1.08)" fill="#8A8AB8">-</text>
<text transform="translate(612.86 573.00) scale(1 1.08)" fill="#8A8AB8">=</text>
<text transform="translate(612.86 588.00) scale(1 1.08)" fill="#8A8AB8">=</text>
<text transform="translate(656.18 527.00) scale(1 1.08)" fill="#0C0C78" stroke="#0C0C78">A</text>
<text transform="translate(656.18 542.00) scale(1 1.08)" fill="#0C0C78" stroke="#0C0C78">A</text>
<text transform="translate(658.42 557.00) scale(1 1.08)" fill="#8A8AB8">-</text>
<text transform="translate(656.86 573.00) scale(1 1.08)" fill="#8A8AB8">=</text>
<text transform="translate(656.86 588.00) scale(1 1.08)" fill="#8A8AB8">=</text>
<text transform="translate(700.18 527.00) scale(1 1.08)" fill="#0C0C78" stroke="#0C0C78">A</text>
<text transform="translate(700.18 542.00) scale(1 1.08)" fill="#0C0C78" stroke="#0C0C78">A</text>
<text transform="translate(702.34 557.00) scale(1 1.08)" fill="#8A8AB8">-</text>
<text transform="translate(700.78 573.00) scale(1 1.08)" fill="#8A8AB8">=</text>
<text transform="translate(700.78 588.00) scale(1 1.08)" fill="#8A8AB8">=</text>
<text transform="translate(743.66 527.00) scale(1 1.08)" fill="#0C0C78" stroke="#0C0C78">G</text>
<text transform="translate(743.66 542.00) scale(1 1.08)" fill="#0C0C78" stroke="#0C0C78">G</text>
<text transform="translate(746.34 557.00) scale(1 1.08)" fill="#8A8AB8">-</text>
<text transform="translate(744.86 573.00) scale(1 1.08)" fill="#8A8AB8">=</text>
<text transform="translate(744.86 588.00) scale(1 1.08)" fill="#8A8AB8">=</text>
<text transform="translate(787.65 527.00) scale(1 1.08)" fill="#0C0C78" stroke="#0C0C78">G</text>
<text transform="translate(787.65 542.00) scale(1 1.08)" fill="#0C0C78" stroke="#0C0C78">G</text>
<text transform="translate(790.42 557.00) scale(1 1.08)" fill="#8A8AB8">-</text>
<text transform="translate(788.86 573.00) scale(1 1.08)" fill="#8A8AB8">=</text>
<text transform="translate(788.86 588.00) scale(1 1.08)" fill="#8A8AB8">=</text>
<text transform="translate(832.65 527.00) scale(1 1.08)" fill="#0C0C78" stroke="#0C0C78">T</text>
<text transform="translate(832.65 542.00) scale(1 1.08)" fill="#0C0C78" stroke="#0C0C78">T</text>
<text transform="translate(834.34 557.00) scale(1 1.08)" fill="#8A8AB8">-</text>
<text transform="translate(832.78 573.00) scale(1 1.08)" fill="#8A8AB8">=</text>
<text transform="translate(832.78 588.00) scale(1 1.08)" fill="#8A8AB8">=</text>
<text transform="translate(875.92 527.00) scale(1 1.08)" fill="#0C0C78" stroke="#0C0C78">C</text>
<text transform="translate(875.92 542.00) scale(1 1.08)" fill="#0C0C78" stroke="#0C0C78">C</text>
<text transform="translate(878.34 557.00) scale(1 1.08)" fill="#8A8AB8">-</text>
<text transform="translate(876.86 573.00) scale(1 1.08)" fill="#8A8AB8">=</text>
<text transform="translate(876.86 588.00) scale(1 1.08)" fill="#8A8AB8">=</text>
<text transform="translate(920.18 527.00) scale(1 1.08)" fill="#0C0C78" stroke="#0C0C78">A</text>
<text transform="translate(920.18 542.00) scale(1 1.08)" fill="#0C0C78" stroke="#0C0C78">A</text>
<text transform="translate(922.42 557.00) scale(1 1.08)" fill="#8A8AB8">-</text>
<text transform="translate(920.86 573.00) scale(1 1.08)" fill="#8A8AB8">=</text>
<text transform="translate(920.86 588.00) scale(1 1.08)" fill="#8A8AB8">=</text>
</svg></body></html>
